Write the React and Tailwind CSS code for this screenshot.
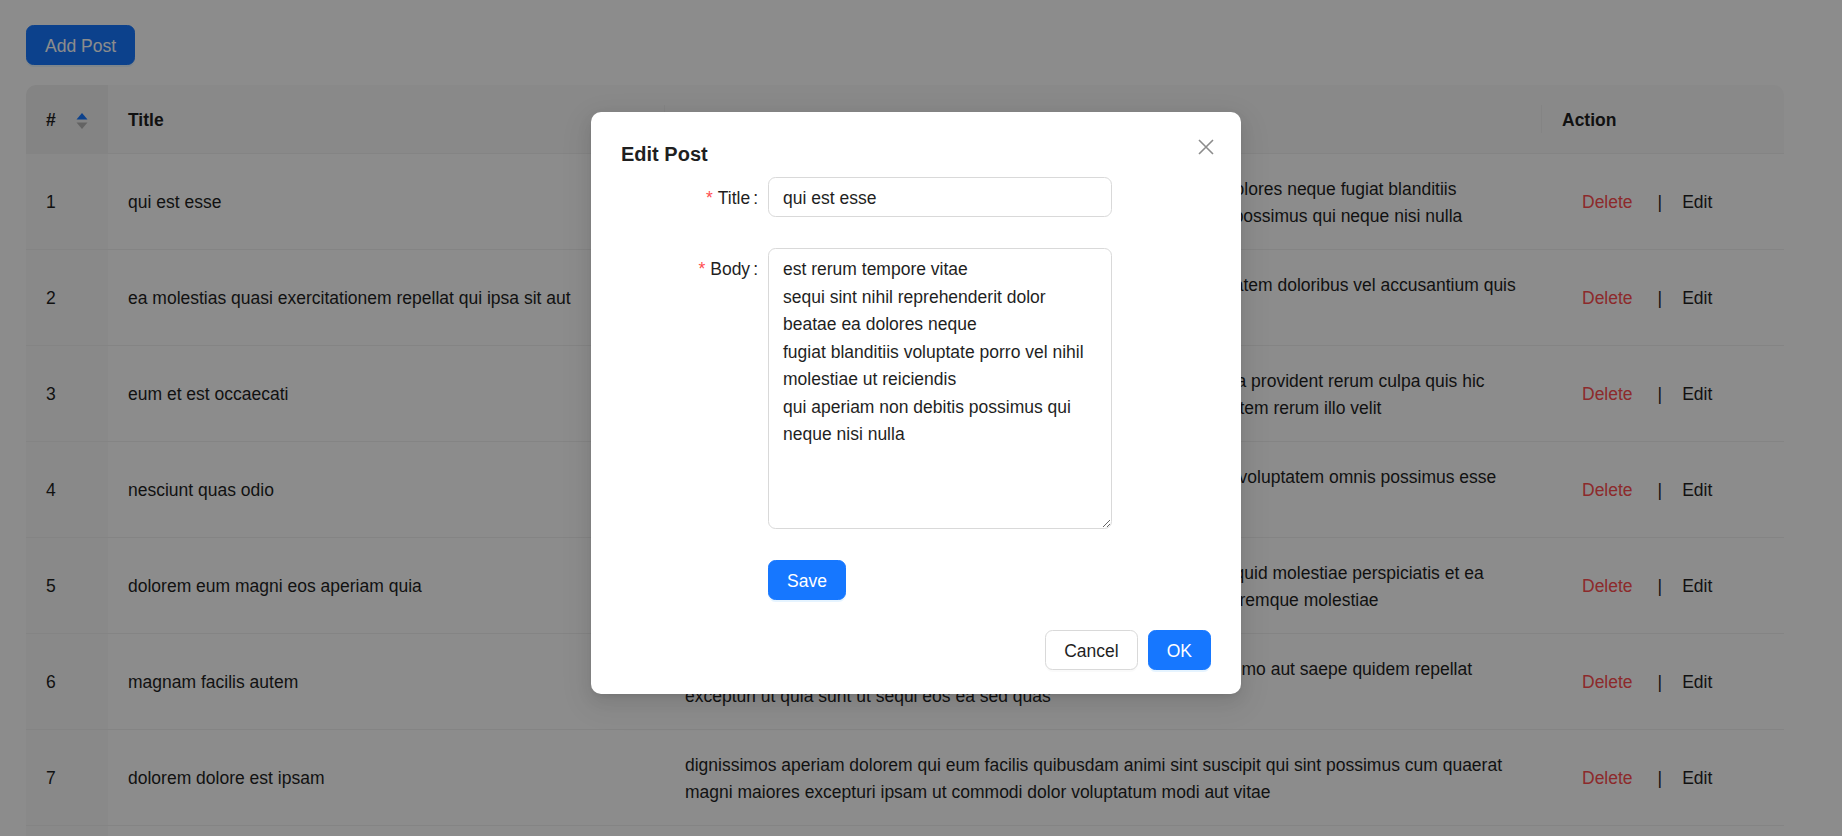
const posts = [
  {
    id: 1,
    title: 'qui est esse',
    body: [
      'est rerum tempore vitae sequi sint nihil reprehenderit dolor beatae ea dolores neque fugiat blanditiis',
      'voluptate porro vel nihil molestiae ut reiciendis qui aperiam non debitis possimus qui neque nisi nulla',
    ],
  },
  {
    id: 2,
    title: 'ea molestias quasi exercitationem repellat qui ipsa sit aut',
    body: [
      'et iusto sed quo iure voluptatem occaecati omnis eligendi aut ad voluptatem doloribus vel accusantium quis',
      'pariatur molestiae porro eius odio et labore et velit aut',
    ],
  },
  {
    id: 3,
    title: 'eum et est occaecati',
    body: [
      'ullam et saepe reiciendis voluptatem adipisci sit amet autem assumenda provident rerum culpa quis hic',
      'commodi nesciunt rem tenetur doloremque ipsam iure quis sunt voluptatem rerum illo velit',
    ],
  },
  {
    id: 4,
    title: 'nesciunt quas odio',
    body: [
      'repudiandae veniam quaerat sunt sed alias aut fugiat sit autem sed est voluptatem omnis possimus esse',
      'voluptatibus quis est aut tenetur dolor neque',
    ],
  },
  {
    id: 5,
    title: 'dolorem eum magni eos aperiam quia',
    body: [
      'ut aspernatur corporis harum nihil quis provident sequi mollitia nobis aliquid molestiae perspiciatis et ea',
      'nemo ab reprehenderit accusantium quas voluptate dolores velit et doloremque molestiae',
    ],
  },
  {
    id: 6,
    title: 'magnam facilis autem',
    body: [
      'dolore placeat quibusdam ea quo vitae magni quis enim qui quis quo nemo aut saepe quidem repellat',
      'excepturi ut quia sunt ut sequi eos ea sed quas',
    ],
  },
  {
    id: 7,
    title: 'dolorem dolore est ipsam',
    body: [
      'dignissimos aperiam dolorem qui eum facilis quibusdam animi sint suscipit qui sint possimus cum quaerat',
      'magni maiores excepturi ipsam ut commodi dolor voluptatum modi aut vitae',
    ],
  },
  {
    id: 8,
    title: 'nesciunt iure omnis dolorem tempora et accusantium',
    body: [
      'consectetur animi nesciunt iure dolore enim quia ad veniam autem ut quam aut nobis et est aut quod aut',
      'provident voluptas autem voluptas',
    ],
  },
]

const editing = {
  title: 'qui est esse',
  body: 'est rerum tempore vitae\nsequi sint nihil reprehenderit dolor\nbeatae ea dolores neque\nfugiat blanditiis voluptate porro vel nihil\nmolestiae ut reiciendis\nqui aperiam non debitis possimus qui\nneque nisi nulla',
}

function SortIcon() {
  return (
    <svg width="12" height="18" viewBox="0 0 12 18">
      <path d="M6 1 L11.5 7.5 L0.5 7.5 Z" fill="#1677ff" />
      <path d="M6 17 L11.5 10.5 L0.5 10.5 Z" fill="#b5b5b5" />
    </svg>
  )
}

function HeadDivider() {
  return <span className="absolute right-0 top-1/2 -translate-y-1/2 w-px h-[28px] bg-[#f0f0f0]" />
}

function FormLabel({ children }) {
  return (
    <div className="flex items-center justify-end h-[40px] pt-[3px] text-[#1f1f1f]">
      <span className="text-[#ff4d4f] mr-[5px]">*</span>
      {children}
      <span className="ml-[3px] mr-[10px]">:</span>
    </div>
  )
}

const primaryBtn =
  'h-[40px] px-[18px] pt-[3px] border border-[#1677ff] rounded-[7.5px] bg-[#1677ff] text-white shadow-[0_2px_0_rgba(5,145,255,0.1)]'

export default function App() {
  return (
    <div
      className="relative w-[1842px] h-[836px] overflow-hidden bg-white text-[17.5px] leading-[27.5px] text-[#1f1f1f]"
      style={{ fontFamily: '"Liberation Sans", Arial, sans-serif' }}
    >
      <div className="pl-[26px] pt-[25px]">
        <button className={primaryBtn}>Add Post</button>

        <div className="mt-[20px] w-[1758px] rounded-t-[10px] overflow-hidden">
          <table className="w-full table-fixed border-collapse">
            <colgroup>
              <col className="w-[82px]" />
              <col className="w-[557px]" />
              <col className="w-[877px]" />
              <col className="w-[242px]" />
            </colgroup>
            <thead>
              <tr className="text-left font-bold">
                <th className="relative bg-[#f0f0f0] px-[20px] pt-[22px] pb-[18px] border-b border-[#f0f0f0]">
                  <div className="flex items-center justify-between">
                    <span>#</span>
                    <SortIcon />
                  </div>
                </th>
                <th className="relative bg-[#fafafa] px-[20px] pt-[22px] pb-[18px] border-b border-[#f0f0f0]">
                  Title
                  <HeadDivider />
                </th>
                <th className="relative bg-[#fafafa] px-[20px] pt-[22px] pb-[18px] border-b border-[#f0f0f0]">
                  Body
                  <HeadDivider />
                </th>
                <th className="bg-[#fafafa] px-[20px] pt-[22px] pb-[18px] border-b border-[#f0f0f0]">Action</th>
              </tr>
            </thead>
            <tbody>
              {posts.map(post => (
                <tr key={post.id}>
                  <td className="bg-[#fafafa] px-[20px] pt-[22px] pb-[18px] border-b border-[#f0f0f0]">{post.id}</td>
                  <td className="px-[20px] pt-[22px] pb-[18px] border-b border-[#f0f0f0]">{post.title}</td>
                  <td className="px-[20px] pt-[22px] pb-[18px] border-b border-[#f0f0f0]">
                    {post.body.map(line => (
                      <div key={line} className="whitespace-nowrap">
                        {line}
                      </div>
                    ))}
                  </td>
                  <td className="px-[20px] pt-[22px] pb-[18px] border-b border-[#f0f0f0]">
                    <div className="flex items-center">
                      <span className="ml-[20px] text-[#ff4d4f]">Delete</span>
                      <span className="ml-[25px]">|</span>
                      <span className="ml-[20px]">Edit</span>
                    </div>
                  </td>
                </tr>
              ))}
            </tbody>
          </table>
        </div>
      </div>

      {/* modal mask */}
      <div className="absolute inset-0 bg-[rgba(0,0,0,0.45)]" />

      <div className="absolute left-[591px] top-[112px] w-[650px] bg-white rounded-[10px] px-[30px] pt-[25px] pb-[24px] shadow-[0_6px_16px_0_rgba(0,0,0,0.08),0_3px_6px_-4px_rgba(0,0,0,0.12),0_9px_28px_8px_rgba(0,0,0,0.05)]">
        <button className="absolute right-[21px] top-[21px] w-[28px] h-[28px] flex items-center justify-center">
          <svg width="16" height="16" viewBox="0 0 16 16">
            <path d="M1 1 L15 15 M15 1 L1 15" stroke="#8c8c8c" strokeWidth="1.6" />
          </svg>
        </button>

        <div className="text-[20px] leading-[30px] font-bold text-[#1f1f1f] pt-[2px] mb-[8px]">Edit Post</div>

        <div className="grid grid-cols-[147px_344px]">
          <FormLabel>Title</FormLabel>
          <input
            defaultValue={editing.title}
            className="h-[40px] px-[14px] pt-[3px] border border-[#d9d9d9] rounded-[7.5px] outline-none text-[#1f1f1f]"
          />

          <div className="col-span-2 h-[31px]" />

          <FormLabel>Body</FormLabel>
          <textarea
            defaultValue={editing.body}
            className="h-[281px] px-[14px] pt-[7px] pb-[3px] border border-[#d9d9d9] rounded-[7.5px] outline-none leading-[27.5px] text-[#1f1f1f] resize-y"
          />

          <div className="col-span-2 h-[31px]" />

          <div />
          <div>
            <button className={primaryBtn}>Save</button>
          </div>
        </div>

        <div className="flex justify-end gap-[10px] mt-[30px]">
          <button className="h-[40px] px-[18px] pt-[3px] border border-[#d9d9d9] rounded-[7.5px] bg-white shadow-[0_2px_0_rgba(0,0,0,0.02)]">
            Cancel
          </button>
          <button className={primaryBtn}>OK</button>
        </div>
      </div>
    </div>
  )
}
